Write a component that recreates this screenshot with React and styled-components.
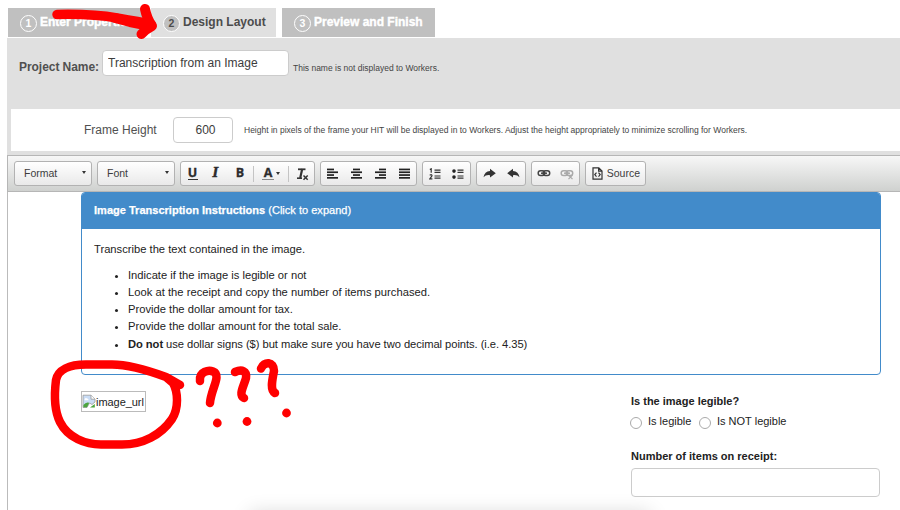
import React from "react";
import styled, { createGlobalStyle, css } from "styled-components";

const Global = createGlobalStyle`
  * { box-sizing: border-box; }
  body { margin: 0; background: #fff; font-family: "Liberation Sans", Arial, sans-serif; color: #222; overflow: hidden; }
`;

const Page = styled.div`
  position: relative;
  width: 900px;
  height: 510px;
  overflow: hidden;
  padding: 8px 0 0 7px;
  display: flex;
  flex-direction: column;
`;

const Tabs = styled.nav`
  display: flex;
  gap: 6px;
  height: 29px;
  padding-left: 1px;
  flex: none;
`;

const Tab = styled.div`
  display: flex;
  align-items: center;
  width: ${(p) => p.$width}px;
  padding: 0 0 1px 12px;
  background: ${(p) => (p.$active ? "#e0e0e0" : "#c0c0c0")};
  color: ${(p) => (p.$active ? "#4c4c4c" : "#fff")};
  font-size: 12px;
  font-weight: bold;
  letter-spacing: ${(p) => p.$tracking}px;
  white-space: nowrap;
  ${(p) => !p.$active && css`-webkit-text-stroke: 0.4px #fff;`}
`;

const StepNumber = styled.span`
  flex: none;
  width: 17px;
  height: 17px;
  margin: 2px 3px 0 0;
  border: 1px solid #fff;
  border-radius: 50%;
  background: ${(p) => (p.$active ? "#c0c0c0" : "transparent")};
  font-size: 10.5px;
  line-height: 15px;
  letter-spacing: 0;
  text-align: center;
  -webkit-text-stroke: 0;
`;

const ProjectPanel = styled.section`
  flex: none;
  height: 117px;
  margin-top: 1px;
  padding: 12px 0 4px 4px;
  background: #e0e0e0;
  display: flex;
  flex-direction: column;
  justify-content: space-between;
`;

const ProjectRow = styled.div`
  display: flex;
  align-items: center;
  padding-left: 8px;
`;

const ProjectLabel = styled.label`
  width: 83px;
  padding-top: 7px;
  font-size: 12px;
  font-weight: bold;
  letter-spacing: -0.05px;
  color: #505050;
  white-space: nowrap;
`;

const TextInput = styled.input`
  display: block;
  width: ${(p) => p.$width}px;
  height: ${(p) => p.$height}px;
  margin: 0;
  padding: 0 5px 1px;
  border: 1px solid #ccc;
  border-radius: 4px;
  background: #fff;
  font: 12px "Liberation Sans", Arial, sans-serif;
  color: #3c3c3c;
  text-align: ${(p) => p.$align || "left"};
  text-indent: ${(p) => p.$indent || 0}px;
  outline: none;
`;

const Hint = styled.span`
  font-size: 8.5px;
  color: #444;
  white-space: nowrap;
  margin-left: ${(p) => p.$gap}px;
  padding-top: ${(p) => p.$drop || 0}px;
`;

const FrameRow = styled.div`
  display: flex;
  align-items: center;
  height: 42px;
  padding-left: 73px;
  background: #fff;
`;

const FrameLabel = styled.label`
  width: 89px;
  font-size: 12px;
  color: #505050;
`;

const Toolbar = styled.div`
  flex: none;
  display: flex;
  align-items: flex-start;
  gap: 5px;
  height: 37px;
  padding: 5px 6px 0;
  border: 1px solid #b6b6b6;
  border-width: 1px 0 1px 1px;
  background: linear-gradient(#f7f7f7, #cfd1cf);
`;

const ToolGroup = styled.div`
  display: flex;
  align-items: center;
  justify-content: ${(p) => p.$justify || "space-around"};
  width: ${(p) => p.$width}px;
  height: 25px;
  padding: ${(p) => p.$pad || 0};
  border: 1px solid #b2b2b2;
  border-radius: 3px;
  background: linear-gradient(#fff, #e9e9e9);
  font-size: 10.5px;
  color: #3c3c3c;
`;

const TextStyleGroup = styled(ToolGroup)`
  display: grid;
  grid-template-columns: 23px 23px 26px 1px 34px 1px 25px;
  justify-items: center;
`;

const Caret = styled.span`
  border: 2.5px solid transparent;
  border-top: 3px solid #333;
  border-bottom: 0;
`;

const Separator = styled.span`
  width: 1px;
  height: 16px;
  background: #c4c4c4;
`;

const Glyph = styled.svg`
  display: block;
  flex: none;
`;

const Canvas = styled.main`
  flex: 1;
  padding-left: 73px;
  border-left: 1px solid #bbb;
`;

const InstructionCard = styled.section`
  width: 800px;
  height: 183px;
  border: 1px solid #428bca;
  border-radius: 4px;
  overflow: hidden;
`;

const CardHeader = styled.header`
  height: 36px;
  padding-left: 12px;
  background: #428bca;
  color: #fff;
  font-size: 11px;
  line-height: 35px;
  letter-spacing: 0.02px;
  -webkit-text-stroke: 0.25px #fff;
`;

const CardBody = styled.div`
  padding: 12px 12px;
  font-size: 11.2px;
  line-height: 17px;
`;

const Intro = styled.p`
  margin: 0 0 9px;
`;

const Steps = styled.ul`
  margin: 0;
  padding-left: 34px;
`;

const Step = styled.li`
  letter-spacing: ${(p) => p.$tracking || 0}px;
  padding-top: ${(p) => p.$drop || 0}px;
`;

const Work = styled.div`
  display: flex;
  justify-content: space-between;
  width: 799px;
  padding-top: 16px;
`;

const BrokenImage = styled.div`
  display: flex;
  align-items: center;
  width: 65px;
  height: 21px;
  border: 1px solid #bbb;
  font-size: 11px;
  letter-spacing: -0.05px;
  white-space: nowrap;
`;

const Questions = styled.form`
  width: 249px;
  padding-top: 3px;
  font-size: 11px;
`;

const Question = styled.div`
  height: 14px;
  line-height: 14px;
  font-weight: bold;
  margin-bottom: ${(p) => p.$gap}px;
`;

const Choices = styled.div`
  display: flex;
  height: 16px;
  margin-bottom: 19px;
`;

const Choice = styled.label`
  display: flex;
  align-items: flex-start;
  width: ${(p) => p.$width}px;
  line-height: 15px;
  white-space: nowrap;
`;

const Radio = styled.span`
  flex: none;
  width: 12px;
  height: 12px;
  margin: 3px 6px 0 -1px;
  border: 1px solid #aaa;
  border-radius: 50%;
`;

const BottomShade = styled.div`
  position: absolute;
  left: 250px;
  top: 513px;
  width: 400px;
  height: 20px;
  box-shadow: 0 0 20px rgba(0, 0, 0, 0.16);
`;

const Markup = styled.svg`
  position: absolute;
  inset: 0;
  pointer-events: none;
`;

const ALIGN_ROWS = {
  left: [[0, 7], [0, 11], [0, 7], [0, 11]],
  center: [[2, 7], [0, 11], [2, 7], [0, 11]],
  right: [[4, 7], [0, 11], [4, 7], [0, 11]],
  justify: [[0, 11], [0, 11], [0, 11], [0, 11]],
};

const AlignIcon = ({ kind }) => (
  <Glyph width="11" height="12" fill="#222">
    {ALIGN_ROWS[kind].map(([x, w], i) => (
      <rect key={i} x={x} y={0.6 + i * 2.8} width={w} height="1.7" />
    ))}
  </Glyph>
);

const LetterGlyph = styled.span`
  font: ${(p) => (p.$italic ? "italic " : "")}bold 12.5px ${(p) => (p.$serif ? '"DejaVu Serif", serif' : '"Open Sans", sans-serif')};
  line-height: 12px;
  height: 13px;
  color: #2c2c2c;
  width: ${(p) => p.$width || 10}px;
  text-align: center;
  -webkit-text-stroke: 0.3px currentColor;
  border-bottom: ${(p) => (p.$bar ? `1px solid ${p.$bar}` : "1px solid transparent")};
`;

const TextColor = styled.span`
  display: flex;
  align-items: center;
  gap: 2px;
`;

const ClearFormatIcon = () => (
  <Glyph width="14" height="14" fill="none" stroke="#333">
    <path d="M3 2.300H10.500" strokeWidth="1.800" />
    <path d="M7.200 2L5.200 11" strokeWidth="2.200" />
    <path d="M2 11.200H7" strokeWidth="1.600" />
    <path d="M8.500 8.500l4.200 4.200M12.700 8.500l-4.200 4.200" strokeWidth="1.500" />
  </Glyph>
);

const ListIcon = ({ numbered }) => (
  <Glyph width="12" height="12" fill="none" stroke="#333">
    <path d="M5.5 2.1H11.500M5.5 4.3H11.500M5.5 8H11.500M5.5 10.2H11.500" strokeWidth="1.2" />
    {numbered ? (
      <path d="M.8 1.5L2.2 .8V4.8M.7 7.2Q3 6 3 7.8L.8 10.9H3.4" strokeWidth="1.2" />
    ) : (
      <g fill="#222" stroke="none">
        <circle cx="2" cy="3.1" r="1.8" />
        <circle cx="2" cy="9.1" r="1.8" />
      </g>
    )}
  </Glyph>
);

const ArrowIcon = ({ back }) => (
  <Glyph width="13" height="11" viewBox="0 0 13 11">
    <path
      transform={back ? "translate(13 0) scale(-1 1)" : undefined}
      d="M7 .8L12.8 5.200 7 9.600V7.2Q2.8 6.6.5 9.2 1.5 3.4 7 3Z"
      fill="#333"
    />
  </Glyph>
);

const LinkIcon = ({ broken }) => (
  <Glyph width="14" height="12" fill="none" stroke={broken ? "#aaa" : "#444"} strokeWidth="1.5">
    <rect x="1.2" y="2.8" width="6.5" height="4.8" rx="2.3" />
    <rect x="6.2" y="2.8" width="6.5" height="4.8" rx="2.3" />
    <path d="M4 5.2H10" />
    {broken && <path d="M8.5 7L12.5 11.2M12.5 7L8.5 11.2" strokeWidth="1.2" />}
  </Glyph>
);

const SourceIcon = () => (
  <Glyph width="11" height="13" fill="none" stroke="#333" strokeWidth="1.2">
    <path d="M1 .8H6.8L10 4V12.2H1ZM6.6 1V4.2H10" />
    <path d="M4.5 5.6L2.8 7.6 4.5 9.6M6.5 5.6L8.2 7.6 6.5 9.6" />
  </Glyph>
);

const BrokenImageIcon = () => (
  <Glyph width="14" height="15" viewBox="0 0 14 15">
    <path d="M1 1.200H9L13 5V8L10 10.500 7.500 9 5 13.500H1Z" fill="#c9dcf5" stroke="#999" strokeWidth=".8" />
    <path d="M9 1.200V5.2H13" fill="#fff" stroke="#999" strokeWidth=".8" />
    <path d="M2.800 6.2a1.4 1.4 0 0 1 2.3-1.6 1.4 1.4 0 0 1 1.4 1.6Z" fill="#fff" />
    <path d="M1.4 13.200V11Q4 7.5 7.200 8.800L5 13.200ZM8 13.500L12.800 10V13.500Z" fill="#4ca53e" />
  </Glyph>
);

const Annotations = () => (
  <Markup width="900" height="510" fill="none" stroke="#f00" strokeLinecap="round" strokeLinejoin="round">
    <path d="M57 14.500C79 14 100 15 117 18C129 20 141 22 151 24" strokeWidth="9.500" />
    <path d="M115 18L130 22 150 26" strokeWidth="10" />
    <path d="M145 9Q147 19 152 26Q146 29 141.500 34" strokeWidth="10" />
    <path
      d="M180 385L166 377C147 370 129 364.500 112 364.500H86C69 364.500 58 370 56 380C54 396 54 410 60 422C68 438 86 444.500 101 444.500H122C143 444.500 161 435 172 419C179 408 178 392 173 383L166 377"
      strokeWidth="8.500"
    />
    <path d="M200 381C199 371 209 370 213 371.500C222 375 211 389 210 403" strokeWidth="8.500" />
    <path d="M235 372C242 369 247 371 246 378C244 386 238 395 244 398" strokeWidth="8.500" />
    <path d="M261 368.500C264 361 274 361 274 371C272 381 270 390 275 393" strokeWidth="8.500" />
    <g fill="#f00" stroke="none">
      <circle cx="217.300" cy="423" r="4.400" />
      <circle cx="247" cy="421.500" r="4.400" />
      <circle cx="286.500" cy="413" r="4.400" />
    </g>
  </Markup>
);

export default function App() {
  return (
    <Page>
      <Global />
      <Tabs>
        <Tab $width={137} $tracking={0}><StepNumber>1</StepNumber>Enter Properties</Tab>
        <Tab $width={125} $active $tracking={0}><StepNumber $active>2</StepNumber>Design Layout</Tab>
        <Tab $width={153} $tracking={0}><StepNumber>3</StepNumber>Preview and Finish</Tab>
      </Tabs>
      <ProjectPanel>
        <ProjectRow>
          <ProjectLabel>Project Name:</ProjectLabel>
          <TextInput $width={187} $height={26} defaultValue="Transcription from an Image" />
          <Hint $gap={4} $drop={9}>This name is not displayed to Workers.</Hint>
        </ProjectRow>
        <FrameRow>
          <FrameLabel>Frame Height</FrameLabel>
          <TextInput $width={60} $height={26} $align="center" $indent={5} defaultValue="600" />
          <Hint $gap={11}>
            Height in pixels of the frame your HIT will be displayed in to Workers. Adjust the height appropriately to minimize scrolling for Workers.
          </Hint>
        </FrameRow>
      </ProjectPanel>
      <Toolbar>
        <ToolGroup $width={78} $justify="space-between" $pad="0 5px 2px 9px">Format<Caret /></ToolGroup>
        <ToolGroup $width={78} $justify="space-between" $pad="0 5px 2px 9px">Font<Caret /></ToolGroup>
        <TextStyleGroup $width={135}>
          <LetterGlyph $bar="#333">U</LetterGlyph>
          <LetterGlyph $serif $italic>I</LetterGlyph>
          <LetterGlyph>B</LetterGlyph>
          <Separator />
          <TextColor><LetterGlyph $width={12} $bar="#888">A</LetterGlyph><Caret /></TextColor>
          <Separator />
          <ClearFormatIcon />
        </TextStyleGroup>
        <ToolGroup $width={97}>
          <AlignIcon kind="left" />
          <AlignIcon kind="center" />
          <AlignIcon kind="right" />
          <AlignIcon kind="justify" />
        </ToolGroup>
        <ToolGroup $width={49}><ListIcon numbered /><ListIcon /></ToolGroup>
        <ToolGroup $width={50}><ArrowIcon /><ArrowIcon back /></ToolGroup>
        <ToolGroup $width={49}><LinkIcon /><LinkIcon broken /></ToolGroup>
        <ToolGroup $width={61} $justify="space-between" $pad="0 5px 1px 6px"><SourceIcon />Source</ToolGroup>
      </Toolbar>
      <Canvas>
        <InstructionCard>
          <CardHeader><strong>Image Transcription Instructions</strong> (Click to expand)</CardHeader>
          <CardBody>
            <Intro>Transcribe the text contained in the image.</Intro>
            <Steps>
              <Step>Indicate if the image is legible or not</Step>
              <Step $tracking={0.02}>Look at the receipt and copy the number of items purchased.</Step>
              <Step>Provide the dollar amount for tax.</Step>
              <Step>Provide the dollar amount for the total sale.</Step>
              <Step $tracking={-0.06} $drop={1}><strong>Do not</strong> use dollar signs ($) but make sure you have two decimal points. (i.e. 4.35)</Step>
            </Steps>
          </CardBody>
        </InstructionCard>
        <Work>
          <BrokenImage><BrokenImageIcon />image_url</BrokenImage>
          <Questions>
            <Question $gap={6}>Is the image legible?</Question>
            <Choices>
              <Choice $width={69}><Radio />Is legible</Choice>
              <Choice><Radio />Is NOT legible</Choice>
            </Choices>
            <Question $gap={5}>Number of items on receipt:</Question>
            <TextInput $width={249} $height={29} aria-label="Number of items on receipt" />
          </Questions>
        </Work>
      </Canvas>
      <BottomShade />
      <Annotations />
    </Page>
  );
}
